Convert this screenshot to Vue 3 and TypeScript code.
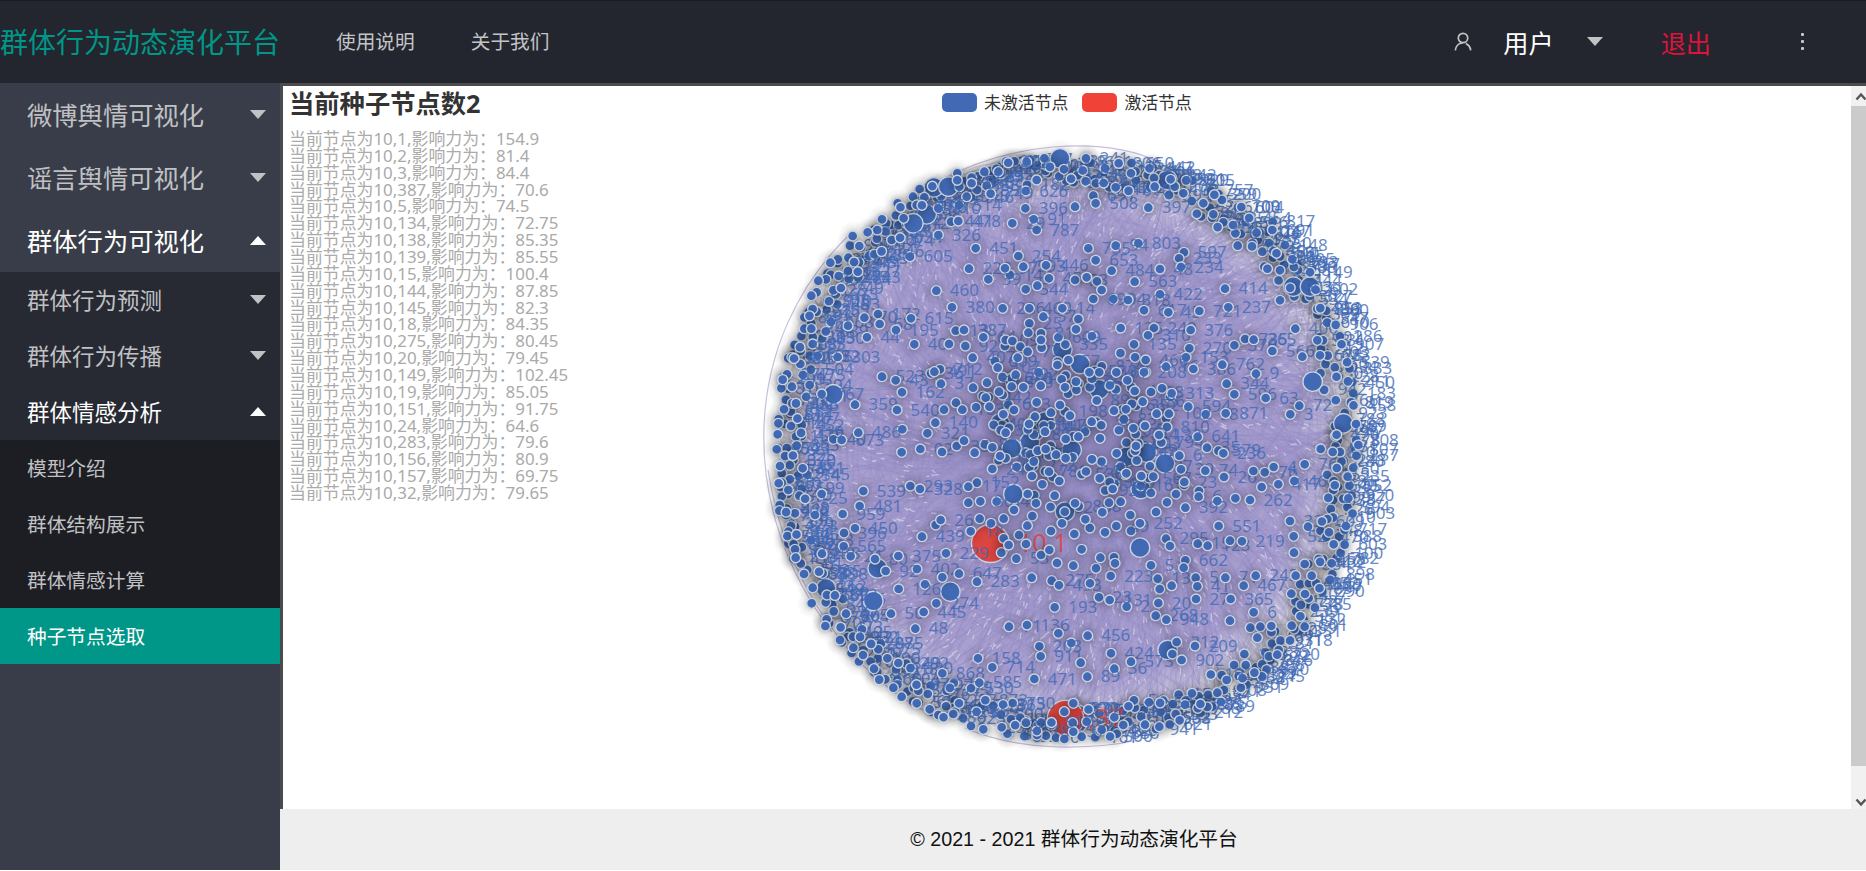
<script setup lang="ts">
interface MenuItem {
  text: string
  level: 1 | 2 | 3
  arrow?: 'down' | 'up'
  active?: boolean
}
interface Dot {
  x: number
  y: number
  r: number
  label: string
  kind: 'idle' | 'hot'
}

const topLinks = ['使用说明', '关于我们']

const menu: MenuItem[] = [
  { text: '微博舆情可视化', level: 1, arrow: 'down' },
  { text: '谣言舆情可视化', level: 1, arrow: 'down' },
  { text: '群体行为可视化', level: 1, arrow: 'up' },
  { text: '群体行为预测', level: 2, arrow: 'down' },
  { text: '群体行为传播', level: 2, arrow: 'down' },
  { text: '群体情感分析', level: 2, arrow: 'up' },
  { text: '模型介绍', level: 3 },
  { text: '群体结构展示', level: 3 },
  { text: '群体情感计算', level: 3 },
  { text: '种子节点选取', level: 3, active: true },
]

const influence: [string, string][] = [
  ['10,1', '154.9'], ['10,2', '81.4'], ['10,3', '84.4'], ['10,387', '70.6'], ['10,5', '74.5'],
  ['10,134', '72.75'], ['10,138', '85.35'], ['10,139', '85.55'], ['10,15', '100.4'], ['10,144', '87.85'],
  ['10,145', '82.3'], ['10,18', '84.35'], ['10,275', '80.45'], ['10,20', '79.45'], ['10,149', '102.45'],
  ['10,19', '85.05'], ['10,151', '91.75'], ['10,24', '64.6'], ['10,283', '79.6'], ['10,156', '80.9'],
  ['10,157', '69.75'], ['10,32', '79.65'],
]

// Deterministic generator so the layout is identical on every load
let seed = 20211
function rand(): number {
  seed = (seed + 0x6d2b79f5) | 0
  let t = Math.imul(seed ^ (seed >>> 15), 1 | seed)
  t = (t + Math.imul(t ^ (t >>> 7), 61 | t)) ^ t
  return ((t ^ (t >>> 14)) >>> 0) / 4294967296
}

// Nodes are stored per sector as "x,y[,label]" in thirds of a pixel
const sectors: { x: number; y: number; small: string; big: string }[] = [
  {
    x: 750, y: 80,
    big: '930,235 552,322 595,320 530,403 490,430 250,943 937,808 990,852',
    small: `827,333,626 860,300 826,385,396 975,380 860,450,787 851,418,91 787,430,29 603,425,441 625,423,478 565,465,326 677,505,451 805,528,254
      480,530,605 657,566,228 780,585,14 765,565,97 820,560,593 888,556,446 715,598,39 897,595,45 975,600,53 1010,592 827,628,544 862,617 559,632,460
      606,682,380 758,685,286 838,685,460 880,710,57 937,685,14 985,717 343,713,70 384,702,172 389,732,68 483,715,615 438,750,195 351,772,44
      294,737 493,793,40 597,792 646,798,92 617,752,13 642,750,387 700,772,64 668,833,407 203,828,47 263,831,303 767,780,09 787,783 811,800
      833,815,77 803,833 743,863,107 797,884,392 838,730,25 835,758 873,760,81 875,803 873,780 978,748 396,890,523 437,901,43 543,880,36
      570,868,712 553,875,491 573,911,37 456,937,162 669,923 711,908,58 747,935 315,974,359 441,990,540 582,989 618,968 637,989,163 678,982 707,953
      718,980 785,920 820,922 872,917 935,898 945,922 922,855 955,840 860,967 903,998 930,975 960,1007 855,1010 792,990 760,1003 565,385,710
      650,350,515 628,320 215,942,767 1007,235 942,268 883,235 830,245 768,245,211 703,275,83 745,275 665,293 622,280 710,317,53 509,327 489,350
      523,352 443,370,68 500,375 396,418 461,415 382,450 353,457,91 308,468 328,498,29 425,480,674 373,523,20 295,533,421 327,547 241,548,33
      294,573 266,588,479 228,598,86 205,602 250,631,28 200,637,81 184,647 163,712,83 200,695 188,687 163,746 184,746,74 188,792,95 152,813
      126,832,30 151,852 111,883,277 94,925,81 126,920 127,970,802 102,988`,
  },
  {
    x: 1080, y: 80,
    big: '262,300 640,620 690,620 698,905 57,928',
    small: `205,383,397 40,347,691 47,370,508 175,490,803 107,497,94 25,505,735 47,541,653 312,517,597 297,535,233 303,561,234 240,567,48 164,605,563
      95,572,484 51,604 20,592 435,626,414 445,682,237 240,643,422 100,657,94 144,660,318 40,657,69 65,630 192,691,617 265,697,45 358,693,721
      122,744,125 222,744,249 204,766,310 332,750,376 328,805,270 318,832,153 162,793,135 165,832 197,840,466 463,796,370 495,777,735 521,779,265
      577,813,566 258,860,16 340,867,386 427,854,762 528,881,9 440,911,344 463,943,596 557,954,63 192,877,208 109,877,67 58,877 28,877 142,901
      164,933,1 213,936,28 246,925 275,940,313 188,965,186 325,980,594 377,1003,98 267,1001,102 230,1001 437,1000,871 138,988 102,992 658,977,72
      631,1003,3 646,746,400 712,781,53 720,826,678 667,830 600,661 553,560 600,571 473,497,78 517,490 547,515 466,460,67 400,403 430,427,43
      459,435 370,370 426,360 484,381,604 222,294 224,320 310,340 284,320,206 153,280 107,322 71,309,44 75,265 121,250 17,304 18,235,241
      578,425,817 577,450,691 615,495,148 637,538,405 690,577,149 580,513,35`,
  },
  {
    x: 750, y: 420,
    big: '750,10 785,85 840,65 965,90 790,222 945,275 383,445 601,515 370,543 228,505 885,5',
    small: `457,28 532,40,321 556,8,140 250,58,40 275,60,673 325,38,486 455,97 511,87,02 576,96 620,78,35 642,62 674,98 727,82 767,115,48 727,147,24
      158,145,881 340,213,539 329,258,481 278,282,959 481,198,293 510,207,328 681,188,152 655,200,17 655,248 691,244,36 557,315 572,300,26
      516,350,439 588,400,229 282,339,396 315,325,450 281,379,565 302,409,21 216,401,49 375,417,80 445,408,375 501,447,402 407,453,92 577,472
      627,461,647 681,485,283 525,493 559,550,274 446,507,126 423,581,50 521,576,445 496,626,48 777,620,71 831,615,136 845,473 905,482,275
      927,496,493 914,562,193 925,640 964,669 868,679,203 872,709,911 684,715,158 727,742,714 853,777,471 992,728 577,760,868 611,790 663,805,530
      688,788,585 788,849,750 689,296 723,310 761,296 662,334,18 807,345 828,372 799,416,53 754,398 761,355 776,375 873,405 898,390 921,429
      970,437 995,388 903,333 847,288 832,317 936,310 973,342 858,250 846,168 877,193 897,155 928,183 914,227 975,250 833,222 792,270 863,92
      887,87 918,104 947,57 985,50 947,115 885,35 837,12 767,38 750,108 85,10 123,18 83,43 80,88,909 105,108 90,138 120,178 95,188,63 148,227,10
      115,210 215,222 89,255 88,272 135,280 195,285 115,335,727 112,348,539 135,388,979 137,413 162,462,568 188,503 218,460,38 185,550 227,547
      230,598 288,581,47 226,618 270,660 309,650 336,628 310,683 339,705 385,688,675 412,715 445,729,849 372,746 406,778 430,803 455,830 505,812
      500,850 539,868 565,885 610,882 627,850 663,918 700,928 755,922 811,893 828,908 873,908 918,953 943,957 888,947 861,945 970,850 943,875
      968,908 905,915 995,950 1010,905`,
  },
  {
    x: 1080, y: 420,
    big: '140,110 200,98 255,130 182,207 180,383 263,690 790,10',
    small: `353,50,641 381,83,35 415,92,579 430,100,236 298,107,6 303,148,39 376,152,74 432,171,26 313,186,23 520,153 554,157,76 581,141,4 674,133,761
      643,183,46 595,193,417 545,201 288,222 357,213 356,230,6 412,243 466,235 510,240,262 261,247 316,263,392 416,318,551 228,276 151,285 122,245
      87,248 98,207 59,175,2 67,277 16,298 109,318,49 180,310,252 75,337 258,356,295 270,378 353,371,15 383,377,123 450,362 486,364,219 316,421,662
      311,443 213,436,5 233,476,13 239,507 275,497 347,473,5 352,499,41 348,537,27 436,473,71 491,497,467 527,467,243 452,537,365 235,549,20
      227,587,268 259,599,948 450,602 521,577,6 140,560,2 92,468,223 57,532,23 89,540,131 30,490 48,445 61,413 102,412 105,430 23,647,456
      93,700,424 103,746,36 153,725,573 22,770,89 290,666,212 277,702 345,678,209 305,720,902 162,841,51 207,847 630,303,33 684,320 641,349,52
      642,398 674,432 716,417 647,467 695,467 722,87 780,96 511,623 541,620 574,618 635,617 674,620 532,653 705,563 686,535 634,521 596,690
      462,735 497,735 476,768 547,770,245 440,780 412,818 423,846 382,861 336,820 315,854 250,842 299,901 238,920 195,914 130,915 103,892 65,929
      35,5 160,25 195,18 237,45,133 168,78 110,100 60,55 36,118 139,160 184,168 766,48 828,12 835,75 820,143 760,210 803,170 805,235 742,297
      798,318 747,337 761,373 755,430`,
  },
]

const CX = 1067
const CY = 448.5
const code = () => String(100 + Math.floor(rand() * 860))
const rim = (a: number) => 289 + 9 * Math.abs(Math.sin(2 * a))

function parse(list: string, ox: number, oy: number, r: number): Dot[] {
  return list.trim().split(/\s+/).map((item) => {
    const [x, y, label] = item.split(',')
    return { x: ox + Number(x) / 3, y: oy + Number(y) / 3, r, label: label ?? '', kind: 'idle' as const }
  })
}

// Crowded rim of the circular layout
const RIM = 450
const rimDots: Dot[] = Array.from({ length: RIM }, (_, i) => {
  const a = ((i * 0.618034) % 1) * Math.PI * 2 + (rand() - 0.5) * 0.05
  const d = rim(a) - 30 * Math.pow(rand(), 1.5)
  return { x: CX + Math.cos(a) * d, y: CY + Math.sin(a) * d, r: 5, label: code(), kind: 'idle' as const }
})
// Dense cluster around the middle
const coreDots: Dot[] = Array.from({ length: 95 }, () => {
  const a = rand() * Math.PI * 2
  const d = 125 * Math.sqrt(rand()) * (0.45 + 0.55 * rand())
  return { x: 1080 + Math.cos(a) * d, y: 432 + Math.sin(a) * d * 0.95, r: 5, label: rand() < 0.6 ? code() : '', kind: 'idle' as const }
})
const bigDots = sectors.flatMap((s) => parse(s.big, s.x, s.y, 9.8))
const smallDots = sectors.flatMap((s) => parse(s.small, s.x, s.y, 5))
const hotDots: Dot[] = [
  { x: 990.5, y: 543.5, r: 19, label: '10,1', kind: 'hot' },
  { x: 1065.5, y: 718.5, r: 18.2, label: '10,37', kind: 'hot' },
]
const split = 370
const dots: Dot[] = [...rimDots.slice(0, split), ...bigDots, ...hotDots, ...coreDots, ...smallDots, ...rimDots.slice(split)]
const labelX = (d: Dot) => (d.kind === 'hot' ? (d.r > 18.5 ? 1018 : 1060) : d.x + 13.5)

// Curved relations, batched so that overlapping batches build up tone
const edgeBatches: string[] = Array.from({ length: 36 }, () => {
  let path = ''
  for (let i = 0; i < 44; i++) {
    const a = rand() < 0.6 ? bigDots[Math.floor(rand() * bigDots.length)] : coreDots[Math.floor(rand() * coreDots.length)]
    const b = rand() < 0.6 ? rimDots[Math.floor(rand() * rimDots.length)] : smallDots[Math.floor(rand() * smallDots.length)]
    const mx = (a.x + b.x) / 2 + (b.y - a.y) * 0.16
    const my = (a.y + b.y) / 2 - (b.x - a.x) * 0.16
    path += `M${a.x.toFixed(1)} ${a.y.toFixed(1)}Q${mx.toFixed(1)} ${my.toFixed(1)} ${b.x.toFixed(1)} ${b.y.toFixed(1)}`
  }
  return path
})

// Small gaps where relations leave the background visible
const gaps: string = Array.from({ length: 1700 }, () => {
  const a = rand() * Math.PI * 2
  const d = 275 - 150 * Math.pow(rand(), 1.4)
  const x = CX + Math.cos(a) * d
  const y = CY + Math.sin(a) * d
  const t = a + (rand() - 0.5) * 1.1 + 0.35
  const l = 2 + rand() * 5
  return `M${x.toFixed(1)} ${y.toFixed(1)}l${(Math.cos(t) * l).toFixed(1)} ${(Math.sin(t) * l).toFixed(1)}`
}).join('')
</script>

<template>
  <div class="layout">
    <header class="header">
      <div class="logo">群体行为动态演化平台</div>
      <nav class="links">
        <a v-for="t in topLinks" :key="t">{{ t }}</a>
      </nav>
      <div class="account">
        <svg class="person" width="18" height="20" viewBox="0 0 18 20">
          <circle cx="9" cy="6" r="4.7" />
          <path d="M1.3 18.4C1.8 14 4.8 10.9 8.6 10.8M11.9 11.6C14.6 12.7 16.3 15.2 16.7 18.4" />
        </svg>
        <span class="user">用户</span>
        <i class="caret wide"></i>
        <span class="quit">退出</span>
        <span class="more"><i></i><i></i><i></i></span>
      </div>
    </header>

    <div class="body">
      <aside class="side">
        <div v-for="m in menu" :key="m.text" class="item" :class="['l' + m.level, { open: m.arrow === 'up', active: m.active }]">
          <span>{{ m.text }}</span>
          <i v-if="m.arrow" class="caret" :class="m.arrow"></i>
        </div>
      </aside>

      <div class="right">
        <main class="frame">
          <section class="info">
            <h3>当前种子节点数2</h3>
            <p v-for="[id, v] in influence" :key="id">当前节点为{{ id }},影响力为：{{ v }}</p>
          </section>

          <div class="legend">
            <i class="swatch blue"></i><span>未激活节点</span>
            <i class="swatch red"></i><span>激活节点</span>
          </div>

          <svg class="graph" width="680" height="660" viewBox="740 115 680 660">
            <defs>
              <radialGradient id="disc" gradientUnits="userSpaceOnUse" cx="1067" cy="448" r="292">
                <stop offset="0" stop-color="#9c92c6" />
                <stop offset="0.8" stop-color="#aaa1d0" />
                <stop offset="0.91" stop-color="#c3bed9" />
                <stop offset="1" stop-color="#e4e3e2" />
              </radialGradient>
              <radialGradient id="shade">
                <stop offset="0.25" stop-color="#000" stop-opacity="0.17" />
                <stop offset="0.6" stop-color="#000" stop-opacity="0.055" />
                <stop offset="1" stop-color="#000" stop-opacity="0" />
              </radialGradient>
            </defs>
            <circle cx="1067" cy="448" r="287" fill="url(#disc)" />
            <path v-for="(p, i) in edgeBatches" :key="i" :d="p" class="edge" />
            <path :d="gaps" class="gap" />
            <path class="arc" d="M852 232C739 340 737 508 832 632M935 183C1010 142 1100 135 1160 162M768 470C785 580 850 680 940 718M965 728C1020 752 1090 750 1140 740" />
            <template v-for="(d, i) in dots" :key="'d' + i">
              <circle :cx="d.x" :cy="d.y" :r="d.r + 10" fill="url(#shade)" />
              <circle :cx="d.x" :cy="d.y" :r="d.r" :class="['dot', d.kind]" />
              <text v-if="d.label" :x="labelX(d)" :y="d.kind === 'hot' ? d.y + 8 : d.y + 5.6" :class="['tag', d.kind]">{{ d.label }}</text>
            </template>
          </svg>

          <div class="scroll">
            <svg width="15" height="20" viewBox="0 0 15 20"><path d="M5.5 13.5L10 8.5L14.5 13.5" /></svg>
            <div class="thumb"></div>
            <svg width="15" height="20" viewBox="0 0 15 20"><path d="M5.5 7.5L10 12.5L14.5 7.5" /></svg>
          </div>
        </main>
        <footer class="footer">© 2021 - 2021 群体行为动态演化平台</footer>
      </div>
    </div>
  </div>
</template>

<style>
body {
  margin: 0;
  background: #fff;
  overflow: hidden;
}
</style>

<style scoped>
.layout {
  width: 1866px;
  height: 870px;
  font-family: 'Noto Sans', 'Noto Sans CJK SC', sans-serif;
  overflow: hidden;
}
.header {
  box-sizing: border-box;
  height: 83px;
  display: flex;
  align-items: center;
  background: #23262e;
  border-top: 1px solid #191b24;
  color: #c3c4c6;
}
.logo {
  width: 280px;
  font-size: 28px;
  line-height: 40px;
  color: #009688;
  white-space: nowrap;
}
.links {
  display: flex;
  gap: 56px;
  margin-left: 56px;
  padding-bottom: 3px;
  font-size: 19.7px;
}
.account {
  display: flex;
  align-items: center;
  margin-left: auto;
  padding-bottom: 1px;
  font-size: 25.2px;
}
.person {
  fill: none;
  stroke: #c3c4c6;
  stroke-width: 1.7;
  margin-right: 31px;
}
.user {
  color: #fff;
}
.caret {
  border: 8px solid transparent;
  border-bottom-width: 0;
  border-top: 9px solid #c1c2c5;
}
.caret.up {
  border-top-width: 0;
  border-bottom: 9px solid #fff;
}
.caret.wide {
  margin: 0 58px 0 33px;
}
.quit {
  color: #dc143c;
}
.more {
  display: flex;
  flex-direction: column;
  gap: 4px;
  margin: 0 62px 0 90px;
}
.more i {
  width: 3px;
  height: 3px;
  background: #c8c9cb;
  border-radius: 1px;
}
.body {
  display: flex;
  height: 787px;
}
.side {
  width: 280px;
  background: #393d49;
}
.item {
  box-sizing: border-box;
  display: flex;
  align-items: center;
  justify-content: space-between;
  height: 56px;
  padding: 0 14px 0 27px;
  color: #c0c1c3;
}
.item span {
  padding-bottom: 2px;
}
.l1 {
  height: 63px;
  font-size: 25.3px;
}
.l2 {
  background: #272a33;
  font-size: 22.5px;
}
.l3 {
  background: #1d1e23;
  font-size: 19.7px;
}
.item.open,
.item.active {
  color: #fff;
}
.item.active {
  background: #009688;
}
.item .caret {
  margin-bottom: 1px;
}
.right {
  flex: 1;
  display: flex;
  flex-direction: column;
}
.frame {
  position: relative;
  box-sizing: border-box;
  height: 726px;
  display: flex;
  background: #fff;
  border-top: 3px solid #4b4b4b;
  border-left: 3px solid #4b4b4b;
  overflow: hidden;
}
.info {
  padding: 5px 0 0 6px;
}
.info h3 {
  margin: 0 0 15px;
  font-size: 25.3px;
  line-height: 25px;
  font-weight: 700;
  color: #333;
}
.info p {
  margin: 0;
  font-size: 16.9px;
  line-height: 16.86px;
  color: #aaa;
  white-space: nowrap;
}
.legend {
  position: absolute;
  left: 659px;
  top: 6px;
  display: flex;
  align-items: center;
  height: 21px;
  font-size: 16.9px;
  color: #333;
}
.legend span {
  padding-bottom: 2px;
}
.swatch {
  width: 35px;
  height: 19.6px;
  border-radius: 5px;
  margin-right: 7px;
}
.swatch.blue {
  background: #4169b4;
}
.swatch.red {
  background: #f14238;
  margin-left: 14px;
}
.graph {
  position: absolute;
  left: 457px;
  top: 29px;
}
.edge {
  fill: none;
  stroke: #9489c4;
  stroke-width: 1.3;
  opacity: 0.24;
}
.gap {
  fill: none;
  stroke: #fff;
  stroke-width: 1.3;
  opacity: 0.42;
}
.arc {
  fill: none;
  stroke: #8d80bf;
  stroke-width: 1.2;
  opacity: 0.5;
}
.dot {
  fill: #4169b4;
  stroke: #cbd5e5;
  stroke-width: 1.4;
}
.dot.hot {
  fill: #dc4440;
}
.tag {
  font-size: 17px;
  fill: #4169b4;
  fill-opacity: 0.8;
}
.tag.hot {
  font-size: 25px;
  fill: #ea3f3c;
}
.scroll {
  width: 15px;
  margin-left: auto;
  display: flex;
  flex-direction: column;
  background: #f1f1f1;
}
.scroll svg {
  fill: none;
  stroke: #555;
  stroke-width: 2.4;
}
.thumb {
  height: 660px;
  background: #cbcbcb;
  margin-bottom: auto;
}
.scroll svg:last-child {
  margin-bottom: -3px;
}
.footer {
  height: 61px;
  line-height: 61px;
  text-align: center;
  background: #eee;
  font-family: 'Liberation Sans', 'Noto Sans CJK SC', sans-serif;
  font-size: 19.7px;
  color: #111;
  padding-left: 2px;
}
</style>
